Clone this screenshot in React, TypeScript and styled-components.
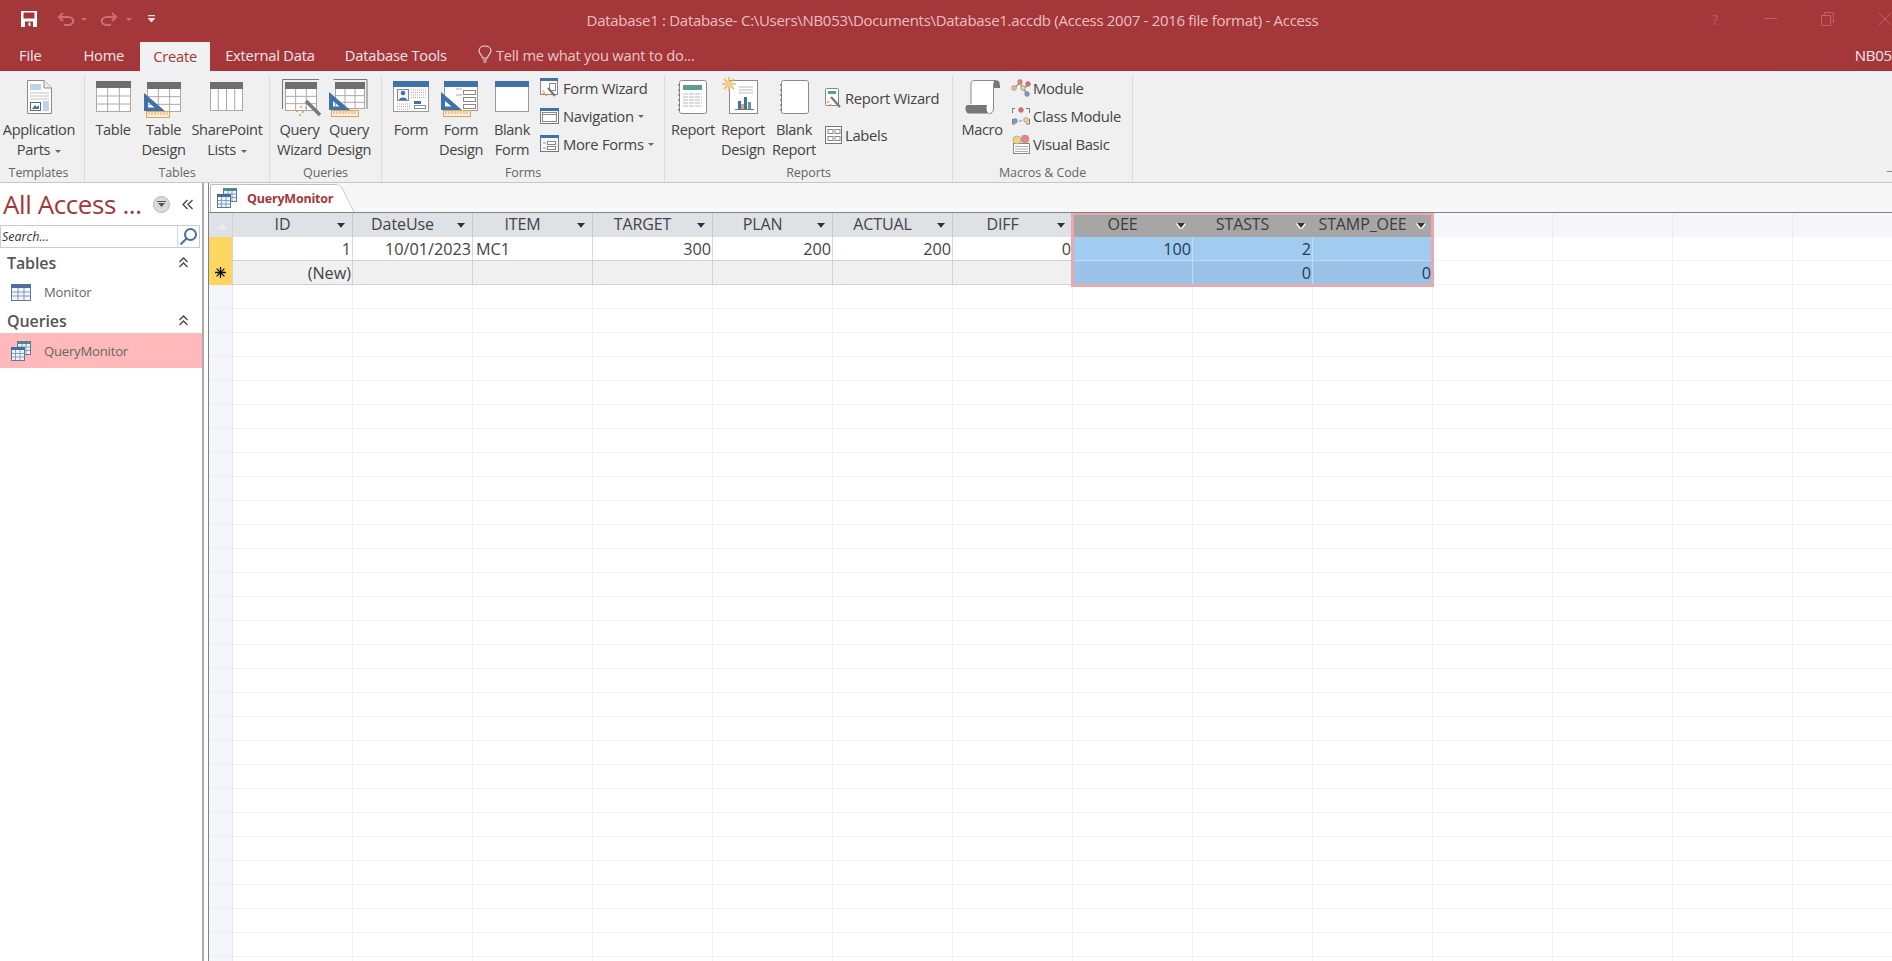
import React from "react";
import styled, { createGlobalStyle } from "styled-components";

const Global = createGlobalStyle`
  html, body { margin: 0; padding: 0; height: 100%; overflow: hidden; background: #fff; }
  #root { height: 100%; }
  * { box-sizing: border-box; }
`;

const FONT = `"Open Sans", "Noto Sans", "Liberation Sans", sans-serif`;
const RED = "#a4373a";

const Page = styled.div`
  width: 100%; height: 100vh; display: flex; flex-direction: column; overflow: hidden;
  font-family: ${FONT}; color: #444; background: #fff;
`;

/* ---------- title bar ---------- */
const TitleBar = styled.header`
  height: 41px; flex: none; background: ${RED}; display: grid;
  grid-template-columns: 1fr auto 1fr; align-items: center;
`;
const Qat = styled.div`display: flex; align-items: center; padding: 0 0 3px 20px;`;
const QatBtn = styled.span<{ $ml?: number }>`display: inline-flex; margin-left: ${(p) => p.$ml ?? 0}px;`;
const TitleText = styled.div`
  font-size: 15px; letter-spacing: -0.3px; color: #edbfc0; white-space: nowrap; padding: 0 0 0 13px; margin-top: -1px;
`;
const WinControls = styled.div`display: flex; justify-content: flex-end; align-items: center; gap: 44px; margin: -3px 0 0 0;`;
const WinHelp = styled.span`font-size: 14px; color: #bd6265; margin-right: 2px;`;

/* ---------- tabs ---------- */
const TabBar = styled.nav`
  height: 30px; flex: none; background: ${RED}; display: flex; align-items: stretch; padding-left: 4px; position: relative;
  overflow: hidden;
`;
const RibbonTab = styled.div<{ $active?: boolean; $mr?: number; $ml?: number }>`
  display: flex; align-items: center; padding: 0 ${(p) => (p.$active ? 13 : 15)}px ${(p) => (p.$active ? 2 : 3)}px;
  margin-right: ${(p) => p.$mr ?? 0}px;
  margin-left: ${(p) => p.$ml ?? 0}px;
  margin-top: ${(p) => (p.$active ? 1 : 0)}px;
  font-size: 14.7px; letter-spacing: -0.2px;
  color: ${(p) => (p.$active ? RED : "#f6e6e6")};
  background: ${(p) => (p.$active ? "#f1f1f1" : "transparent")};
`;
const TellMe = styled.div`
  display: flex; align-items: center; gap: 4px; margin-left: 16px; padding-bottom: 3px; font-size: 14.7px; letter-spacing: -0.2px; color: #eec6c7;
`;
const UserName = styled.div`
  margin-left: auto; display: flex; align-items: center; padding-bottom: 3px; font-size: 15px; color: #f8eaea; letter-spacing: -0.2px;
`;

/* ---------- ribbon ---------- */
const Ribbon = styled.section`
  height: 112px; flex: none; display: flex; padding: 4px 0 0; position: relative;
  background: linear-gradient(#eff0f4 0, #f0f0f0 10px);
  border-bottom: 1px solid #c6c6c6;
`;
const Group = styled.div<{ $w: number }>`
  width: ${(p) => p.$w}px; flex: none; display: flex; flex-direction: column; border-right: 1px solid #dcdcdc;
`;
const GroupBody = styled.div<{ $pl?: number }>`flex: 1; display: flex; padding-left: ${(p) => p.$pl ?? 0}px;`;
const GroupLabel = styled.div<{ $pr?: number }>`
  height: 18px; line-height: 18px; text-align: center; font-size: 12.5px; letter-spacing: -0.1px; color: #666;
  padding-right: ${(p) => p.$pr ?? 0}px; white-space: nowrap;
`;
const BigBtn = styled.div<{ $w: number }>`
  width: ${(p) => p.$w}px; flex: none; display: flex; flex-direction: column; align-items: center;
`;
const BigLabel = styled.div`
  width: 100%; text-align: center; font-size: 14.6px; line-height: 20px; color: #444; letter-spacing: -0.35px; white-space: nowrap;
  display: flex; flex-direction: column; align-items: center;
`;
const Caret = styled.i<{ $c?: string }>`
  display: inline-block; width: 0; height: 0; margin-left: 5px; vertical-align: 2px;
  border: 3px solid transparent; border-bottom: 0; border-top: 3.5px solid ${(p) => p.$c ?? "#666"};
`;
const SmallCol = styled.div<{ $ml?: number; $gap?: number; $pt?: number }>`
  display: flex; flex-direction: column; margin-left: ${(p) => p.$ml ?? 4}px; gap: ${(p) => p.$gap ?? 0}px;
  padding-top: ${(p) => p.$pt ?? 0}px; margin-top: -1px;
`;
const SmallBtn = styled.div<{ $gap?: number }>`
  height: 28px; display: flex; align-items: center; gap: ${(p) => p.$gap ?? 3}px; font-size: 14.8px; letter-spacing: -0.3px; color: #444; white-space: nowrap;
  & > i { margin-left: 1px; }
`;
const RibbonPin = styled.span`position: absolute; right: 0; bottom: 10px; width: 5px; height: 1px; background: #888;`;

/* ---------- body ---------- */
const Body = styled.main`flex: 1; min-height: 0; display: flex;`;
const NavPane = styled.aside`
  width: 202px; flex: none; background: #fff; display: flex; flex-direction: column;
`;
const Splitter = styled.div`
  width: 7px; flex: none; background: #fff; border-left: 2px solid #a9abb0; border-right: 1px solid #7f8188;
`;
const NavHead = styled.div`height: 42px; flex: none; display: flex; align-items: center; padding: 0 8px 0 3px; color: ${RED};`;
const NavTitle = styled.div`flex: 1; font-size: 26px; letter-spacing: -0.4px; white-space: nowrap; font-weight: 400; line-height: 1;`;
const NavRound = styled.span`
  width: 17px; height: 17px; border-radius: 50%; background: #d8dade; border: 1px solid #b5b7bb;
  display: flex; align-items: center; justify-content: center; margin-right: 12px;
`;
const SearchBox = styled.div`
  height: 23px; flex: none; width: 200px; display: flex; align-items: stretch; border: 1px solid #c8ccd2; margin-bottom: 3px;
`;
const SearchText = styled.div`flex: 1; font-size: 12.5px; font-style: italic; line-height: 21px; padding-left: 1px; color: #333;`;
const SearchIcon = styled.div`width: 22px; border-left: 1px solid #d5d8dc; display: flex; align-items: center; justify-content: center;`;
const NavSection = styled.div`
  height: 24px; flex: none; display: flex; align-items: center; justify-content: space-between; padding: 0 13px 1px 7px;
  font-size: 16px; font-weight: 600; color: #555; letter-spacing: -0.1px;
`;
const NavItem = styled.div<{ $sel?: boolean }>`
  height: ${(p) => (p.$sel ? 35 : 34)}px; flex: none; display: flex; align-items: center; gap: 13px; padding-left: 11px;
  font-size: 13.1px; color: #666; letter-spacing: -0.2px;
  background: ${(p) => (p.$sel ? "#ffb9bb" : "transparent")};
`;

const Doc = styled.section`flex: 1; min-width: 0; display: flex; flex-direction: column;`;
const DocStrip = styled.div`
  height: 29px; flex: none; background: #f7f7f7; display: flex; align-items: flex-end; padding-left: 1px;
`;
const DocTab = styled.div`
  width: 124px; height: 28px; position: relative; background: #fff; border: 1px solid #bdbdbd; border-bottom: 0; border-right: 0;
  border-radius: 3px 0 0 0; display: flex; align-items: center; gap: 10px; padding: 0 0 1px 6px;
  font-size: 12.5px; font-weight: 700; color: ${RED}; letter-spacing: -0.2px; white-space: nowrap;
  &::after {
    content: ""; position: absolute; top: -1px; right: -14px; width: 22px; height: 28px; background: #fff;
    border: 1px solid #bdbdbd; border-left: 0; border-bottom: 0; border-radius: 0 6px 0 0; transform: skewX(26deg);
    z-index: 0;
  }
  & > * { position: relative; z-index: 1; }
`;
const Sheet = styled.div`
  flex: 1; min-height: 0; position: relative; overflow: hidden; border-top: 1px solid #82828a;
`;
const HeadRow = styled.div`display: flex; height: 24px;`;
const Row = styled.div`display: flex; height: 24px;`;
const Corner = styled.div`
  width: 24px; flex: none; background: #dee1e6; border-right: 1px solid #cfd2d8; position: relative;
  &::after {
    content: ""; position: absolute; left: 7px; top: 10px; border: 6px solid transparent; border-top: 0; border-bottom: 6px solid #e9ebee;
  }
`;
const Selector = styled.div<{ $filled?: boolean }>`
  width: 24px; flex: none; display: flex; align-items: center; justify-content: center;
  background: ${(p) => (p.$filled ? "#fdd662" : "#f5f6fc")};
  border-right: 1px solid ${(p) => (p.$filled ? "#cfd2d8" : "#e6e8f0")};
  border-bottom: 1px solid ${(p) => (p.$filled ? "#fdd662" : "#eeeff4")};
`;
const HeadCell = styled.div<{ $sel?: boolean }>`
  width: 120px; flex: none; position: relative; display: flex; align-items: center; padding: 0 20px 2px 0;
  background: ${(p) => (p.$sel ? "#a6a6a6" : "#dee1e6")};
  border-right: 1px solid ${(p) => (p.$sel ? "#a6a6a6" : "#c5c9d0")};
  font-size: 16px; color: ${(p) => (p.$sel ? "#3d3d3d" : "#444")}; letter-spacing: -0.1px; line-height: 22px;
`;
const HeadLabel = styled.span`flex: 1; text-align: center; white-space: nowrap;`;
const HeadArrow = styled.span<{ $sel?: boolean }>`
  position: absolute; right: 7px; top: 10px; width: 0; height: 0;
  border: 4px solid transparent; border-bottom: 0; border-top: 5px solid #333;
  filter: ${(p) => (p.$sel ? "drop-shadow(0 1px 0 #fff) drop-shadow(1px 0 0 #fff) drop-shadow(-1px 0 0 #fff)" : "drop-shadow(0 1px 0 #fff)")};
`;
const HeadBlank = styled.div`width: 120px; flex: none; background: #f5f6fc; border-right: 1px solid #eaecf3;`;
const Cell = styled.div<{ $right?: boolean; $tone?: "new" | "empty" | "plain" | "sel" | "selNew" }>`
  width: 120px; flex: none; overflow: hidden; white-space: nowrap; font-size: 16.2px; line-height: 24px; padding: 0 1px 0 3px;
  text-align: ${(p) => (p.$right ? "right" : "left")}; color: #444;
  ${(p) => {
    switch (p.$tone) {
      case "new":
        return "background:#f0f0f0;border-right:1px solid #ced1d8;border-bottom:1px solid #ced1d8;";
      case "sel":
        return "background:#a1cbef;border-right:1px solid #c4dcf2;border-bottom:1px solid #c4dcf2;color:#1e3a5c;";
      case "selNew":
        return "background:#9ac3e7;border-right:1px solid #c4dcf2;border-bottom:1px solid #ced1d8;color:#1e3a5c;";
      case "empty":
        return "background:#fff;border-right:1px solid #f0f1f4;border-bottom:1px solid #f1f2f5;";
      default:
        return "background:#fff;border-right:1px solid #d4d7dd;border-bottom:1px solid #ced1d8;";
    }
  }}
`;
const SelectionOutline = styled.div`
  position: absolute; left: 862px; top: -1px; width: 363px; height: 75px; border: 3px solid #eaa8ad; pointer-events: none;
`;

/* ---------- icon helpers ---------- */
const Big = ({ children }: { children: React.ReactNode }) => (
  <svg width={48} height={44} viewBox="0 0 48 44" fill="none">{children}</svg>
);
const Small = ({ children }: { children: React.ReactNode }) => (
  <svg width={20} height={20} viewBox="0 0 20 20" fill="none">{children}</svg>
);

const TableG = ({ x, y, w, h, cols, rows, head = "#6e6e6e", line = "#a9a9a9", headH = 7, fill = "#fff" }: {
  x: number; y: number; w: number; h: number; cols: number; rows: number; head?: string; line?: string; headH?: number; fill?: string;
}) => {
  const v = Array.from({ length: cols - 1 }, (_, i) => x + ((i + 1) * w) / cols);
  const hr = Array.from({ length: rows - 1 }, (_, i) => y + headH + ((i + 1) * (h - headH)) / rows);
  return (
    <g>
      <rect x={x + 0.5} y={y + 0.5} width={w - 1} height={h - 1} fill={fill} stroke={line} />
      <rect x={x} y={y} width={w} height={headH} fill={head} />
      {v.map((p) => <path key={p} d={`M${p} ${y + headH}V${y + h}`} stroke={line} />)}
      {hr.map((p) => <path key={p} d={`M${x} ${p}H${x + w}`} stroke={line} />)}
    </g>
  );
};
const SetSquare = ({ x, y }: { x: number; y: number }) => (
  <path transform={`translate(${x} ${y})`} d="M0 0L21 18H0ZM4 9V14.5H10.5Z" fill="#3f72a8" fillRule="evenodd" />
);
const Ruler = ({ x, y, w }: { x: number; y: number; w: number }) => (
  <g transform={`translate(${x} ${y})`}>
    <rect x={0.5} y={0.5} width={w - 1} height={6} fill="#fbeedd" stroke="#e2a45c" />
    {Array.from({ length: Math.floor(w / 3) - 1 }, (_, i) => (
      <path key={i} d={`M${3 + i * 3} 1V4`} stroke="#e2a45c" />
    ))}
  </g>
);

const AppPartsIcon = () => (
  <Big>
    <path d="M12.5 5.5H29L36.5 13V38.5H12.5Z" fill="#fff" stroke="#8c8c8c" />
    <path d="M29 5.5V13H36.5" fill="#ececec" stroke="#8c8c8c" />
    <rect x={15} y={9} width={11} height={6} fill="#bcd3ea" />
    <path d="M15 18H34M15 21H34M15 24H34" stroke="#c4c4c4" />
    <rect x={15.5} y={27.5} width={10} height={8} fill="#fff" stroke="#666" />
    <path d="M17 34L20 30L22 32L24 30V34Z" fill="#3f72a8" />
    <rect x={28} y={26} width={6} height={10} fill="#bcd3ea" />
  </Big>
);
const TableIcon = () => <Big><TableG x={7} y={6} w={35} h={31} cols={3} rows={3} /></Big>;
const TableDesignIcon = () => (
  <Big><TableG x={7} y={7} w={34} h={30} cols={3} rows={3} /><SetSquare x={4} y={18} /><Ruler x={6} y={36} w={24} /></Big>
);
const SharePointIcon = () => <Big><TableG x={7} y={7} w={33} h={29} cols={4} rows={1} /></Big>;
const QueryWizardIcon = () => (
  <Big>
    <path d="M6.5 34V4.5H43" stroke="#777" />
    <TableG x={9} y={7} w={32} h={29} cols={3} rows={3} />
    <path d="M30 26L44 40" stroke="#7a7a7a" strokeWidth={3.5} />
    <path d="M24 32h2M20 36h2M26 37h2M23 40h2M29 33h1" stroke="#e39a4a" strokeWidth={1.5} />
  </Big>
);
const QueryDesignIcon = () => (
  <Big>
    <path d="M8.5 4.5H42V34" stroke="#777" />
    <TableG x={10} y={7} w={30} h={27} cols={3} rows={3} />
    <SetSquare x={4} y={17} /><Ruler x={6} y={35} w={28} />
  </Big>
);
const FormHead = ({ x, y, w, h }: { x: number; y: number; w: number; h: number }) => (
  <g>
    <rect x={x + 0.5} y={y + 0.5} width={w - 1} height={h - 1} fill="#fff" stroke="#9a9a9a" />
    <rect x={x} y={y} width={w} height={6} fill="#3f72a8" />
  </g>
);
const FormIcon = () => (
  <Big>
    <FormHead x={6} y={6} w={36} h={31} />
    <rect x={10.5} y={14.5} width={11} height={11} fill="#f4f4f4" stroke="#888" />
    <circle cx={16} cy={18} r={2.3} fill="#3f72a8" />
    <path d="M12 25C12 21.5 20 21.5 20 25Z" fill="#3f72a8" />
    <path d="M24 15h15M24 17.5h15M24 20h15M24 22.5h15" stroke="#b0b0b0" strokeDasharray="1 1" />
    <path d="M10 29h14M10 31.5h14M10 34h14" stroke="#b0b0b0" strokeDasharray="1 1" />
    <rect x={27} y={26} width={7} height={3} fill="#3f72a8" />
    <rect x={27.5} y={30.5} width={11} height={3} fill="#fff" stroke="#888" />
  </Big>
);
const FormDesignIcon = () => (
  <Big>
    <FormHead x={7} y={6} w={34} h={30} />
    <path d="M19 14h6M19 20h6" stroke="#aaa" />
    <rect x={26.5} y={15.5} width={12} height={4} fill="#fff" stroke="#888" />
    <rect x={26.5} y={22.5} width={12} height={4} fill="#fff" stroke="#888" />
    <rect x={26.5} y={29.5} width={12} height={4} fill="#fff" stroke="#888" />
    <SetSquare x={4} y={17} /><Ruler x={6} y={35} w={28} />
  </Big>
);
const BlankFormIcon = () => <Big><FormHead x={7} y={6} w={34} h={31} /></Big>;
const Spiral = ({ x }: { x: number }) => (
  <path d={`M${x} 9v2M${x} 14v2M${x} 19v2M${x} 24v2M${x} 29v2M${x} 34v2`} stroke="#777" strokeWidth={1.4} />
);
const ReportIcon = () => (
  <Big>
    <rect x={10.5} y={5.5} width={27} height={33} rx={2} fill="#fff" stroke="#8a8a8a" />
    <Spiral x={10} />
    <rect x={14} y={10} width={19} height={5} fill="#5f9d8d" />
    <path d="M14 19h19M14 22h19M14 25h19M14 28h19M14 31h19" stroke="#b8b8b8" strokeDasharray="5 1" />
  </Big>
);
const ReportDesignIcon = () => (
  <Big>
    <rect x={10.5} y={5.5} width={28} height={33} fill="#fff" stroke="#8a8a8a" />
    <path d="M20 12h14M20 15h14M20 18h14" stroke="#bbb" />
    <g transform="translate(10 9)" stroke="#f0b45a" strokeWidth={1.6}>
      <path d="M-7 0H7M0 -7V7M-5 -5L5 5M-5 5L5 -5" />
      <circle r={3} fill="#f7cf84" stroke="none" />
    </g>
    <path d="M19 34V26h3v8ZM25 34V22h3v12Z" fill="#3f72a8" />
    <path d="M22 34V29h3v5Z" fill="#e2a45c" />
    <path d="M29 34V27h3v7Z" fill="#5f9d8d" />
    <path d="M16 34.5H35" stroke="#777" />
  </Big>
);
const BlankReportIcon = () => (
  <Big><rect x={11.5} y={5.5} width={27} height={33} rx={2} fill="#fff" stroke="#8a8a8a" /><Spiral x={11} /></Big>
);
const MacroIcon = () => (
  <Big>
    <path d="M13 29V9C13 6.5 14.5 5.5 17 5.5H38C36 6 35.5 8 35.5 10V34C35.5 37 33.5 38.5 31 38.5" fill="#fff" stroke="#8a8a8a" />
    <path d="M36 5.5H39C41 5.5 42 7 42 13H36Z" fill="#777" />
    <path d="M10 30H29C28 33 28.5 37 31 38.5H11C7 38.5 6 30 10 30Z" fill="#777" />
  </Big>
);

const FormWizardIcon = () => (
  <Small>
    <rect x={0.5} y={0.5} width={17} height={16} fill="#fff" stroke="#888" />
    <rect x={0} y={0} width={18} height={3} fill="#3f72a8" />
    <rect x={9.5} y={5.5} width={6} height={7} fill="#fff" stroke="#888" />
    <path d="M8 10L15 18" stroke="#777" strokeWidth={2.2} />
    <path d="M3 16l2-2M6 18l2-2M2 13h2" stroke="#e39a4a" strokeWidth={1.2} />
  </Small>
);
const NavigationIcon = () => (
  <Small>
    <rect x={0.5} y={2.5} width={18} height={15} fill="#fff" stroke="#777" />
    <rect x={0} y={2} width={19} height={3} fill="#3f72a8" />
    <rect x={2.5} y={6.5} width={14} height={9} fill="#fff" stroke="#888" />
    <path d="M3 8.5h13" stroke="#888" />
  </Small>
);
const MoreFormsIcon = () => (
  <Small>
    <rect x={0.5} y={1.5} width={18} height={16} fill="#f4f7fb" stroke="#777" />
    <rect x={0} y={1} width={19} height={3} fill="#3f72a8" />
    <rect x={7.5} y={7.5} width={8} height={3} fill="#fff" stroke="#888" />
    <rect x={7.5} y={12.5} width={8} height={3} fill="#fff" stroke="#888" />
    <path d="M3 9h3M3 14h3" stroke="#999" />
  </Small>
);
const ReportWizardIcon = () => (
  <Small>
    <rect x={1.5} y={0.5} width={13} height={17} rx={1} fill="#fff" stroke="#888" />
    <rect x={4} y={3} width={8} height={3} fill="#5f9d8d" />
    <path d="M7 9L16 19" stroke="#777" strokeWidth={2.2} />
    <path d="M3 15l2-2M5 18l2-2" stroke="#e39a4a" strokeWidth={1.2} />
  </Small>
);
const LabelsIcon = () => (
  <Small>
    <rect x={1.5} y={1.5} width={16} height={17} fill="#fff" stroke="#777" />
    <rect x={4} y={4.5} width={5} height={4} stroke="#888" />
    <rect x={11} y={4.5} width={5} height={4} stroke="#888" />
    <rect x={4} y={11.5} width={5} height={4} stroke="#888" />
    <rect x={11} y={11.5} width={5} height={4} stroke="#888" />
  </Small>
);
const Bead = ({ x, y, c }: { x: number; y: number; c: string }) => (
  <circle cx={x} cy={y} r={2.4} fill={c} stroke="#777" strokeWidth={0.5} />
);
const ModuleIcon = () => (
  <Small>
    <path d="M3 10L9 5L12 11L17 7M12 11L16 15" stroke="#888" strokeWidth={1.2} />
    <Bead x={3} y={10} c="#f2b6a6" /><Bead x={9} y={4} c="#e8807c" /><Bead x={12} y={10} c="#f2d27c" />
    <Bead x={17} y={6} c="#e06a6a" /><Bead x={16} y={16} c="#6f9fcf" />
  </Small>
);
const ClassIcon = () => (
  <Small>
    <path d="M4 2.5H1.5V7M15 2.5H18.5V7M1.5 13V18H4M18.5 13V18H15" stroke="#777" />
    <Bead x={10} y={4} c="#e06a6a" /><Bead x={4} y={15} c="#6f9fcf" /><Bead x={15} y={14} c="#f2d27c" />
    <path d="M8 15h3" stroke="#888" />
  </Small>
);
const VbIcon = () => (
  <Small>
    <rect x={2.5} y={9.5} width={16} height={10} fill="#fff" stroke="#888" />
    <path d="M4 12.5h13M4 15h13M4 17.5h13" stroke="#aaa" />
    <circle cx={6} cy={6} r={4} fill="#f2d27c" stroke="#999" strokeWidth={0.6} />
    <circle cx={14} cy={5} r={4} fill="#e9848a" stroke="#999" strokeWidth={0.6} />
  </Small>
);
const NavTableIcon = () => (
  <svg width={20} height={17} viewBox="0 0 20 17" fill="none">
    <rect x={0.5} y={0.5} width={19} height={16} fill="#f3f6fb" stroke="#61799c" />
    <rect x={0} y={0} width={20} height={4} fill="#4d6e9e" />
    <path d="M7 4V16M13 4V16M1 8h18M1 12h18" stroke="#7e97ba" />
  </svg>
);
const QueryIcon = () => (
  <svg width={20} height={20} viewBox="0 0 20 20" fill="none">
    <rect x={6.5} y={0.5} width={13} height={13} fill="#eef3f8" stroke="#5c7a93" />
    <rect x={6} y={0} width={14} height={3} fill="#4f8a8c" />
    <path d="M11 3V13M15 3V13M7 6h12M7 9.5h12" stroke="#86a0b5" />
    <rect x={0.5} y={6.5} width={13} height={13} fill="#eef3f8" stroke="#5c7a93" />
    <rect x={0} y={6} width={14} height={3} fill="#3f6f9e" />
    <path d="M4.5 9V19M9 9V19M1 12.5h12M1 16h12" stroke="#86a0b5" />
  </svg>
);
const ChevUp = () => (
  <svg width={11} height={11} viewBox="0 0 11 11" fill="none" stroke="#444" strokeWidth={1.3}>
    <path d="M1.5 5L5.5 1L9.5 5M1.5 10L5.5 6L9.5 10" />
  </svg>
);
const Star = () => (
  <svg width={13} height={13} viewBox="0 0 13 13" stroke="#111" strokeWidth={1.3}>
    <path d="M6.5 1V12M1 6.5H12M2.6 2.6L10.4 10.4M2.6 10.4L10.4 2.6" />
  </svg>
);

/* ---------- data ---------- */
type Col = { name: string; right?: boolean };
const COLUMNS: Col[] = [
  { name: "ID", right: true }, { name: "DateUse", right: true }, { name: "ITEM" },
  { name: "TARGET", right: true }, { name: "PLAN", right: true }, { name: "ACTUAL", right: true },
  { name: "DIFF", right: true }, { name: "OEE", right: true }, { name: "STASTS", right: true }, { name: "STAMP_OEE", right: true },
];
const ROW1 = ["1", "10/01/2023", "MC1", "300", "200", "200", "0", "100", "2", ""];
const ROW2 = ["(New)", "", "", "", "", "", "", "", "0", "0"];
const BLANK_COLS = 4;
const EMPTY_ROWS = 29;
const isSel = (i: number) => i >= 7;

export default function App() {
  return (
    <Page>
      <Global />
      <TitleBar>
        <Qat>
          <QatBtn>
            <svg width={18} height={18} viewBox="0 0 18 18" fill="none">
              <path d="M1 1H17V17H1Z" fill="#fff" />
              <rect x={3.5} y={2.5} width={11} height={6} fill={RED} />
              <rect x={5} y={11.5} width={8} height={5.5} fill={RED} />
              <rect x={8.5} y={12.5} width={2} height={3.5} fill="#fff" />
            </svg>
          </QatBtn>
          <QatBtn $ml={19}>
            <svg width={18} height={15} viewBox="0 0 18 15" fill="none" stroke="#c96f71" strokeWidth={2.2}>
              <path d="M6 1L2 5L6 9M2 5H11C18 5 18 13 11 13H7" />
            </svg>
          </QatBtn>
          <QatBtn $ml={1}><Caret $c="#c96f71" /></QatBtn>
          <QatBtn $ml={13}>
            <svg width={18} height={15} viewBox="0 0 18 15" fill="none" stroke="#c96f71" strokeWidth={2.2}>
              <path d="M12 1L16 5L12 9M16 5H7C0 5 0 13 7 13H11" />
            </svg>
          </QatBtn>
          <QatBtn $ml={3}><Caret $c="#c96f71" /></QatBtn>
          <QatBtn $ml={15}>
            <svg width={9} height={8} viewBox="0 0 9 8"><path d="M1 0H8V1.3H1ZM0.5 3H8.5L4.5 7.5Z" fill="#f3e3e3" /></svg>
          </QatBtn>
        </Qat>
        <TitleText>Database1 : Database- C:\Users\NB053\Documents\Database1.accdb (Access 2007 - 2016 file format) - Access</TitleText>
        <WinControls>
          <WinHelp>?</WinHelp>
          <svg width={13} height={2} viewBox="0 0 13 2"><rect width={13} height={1} fill="#bd6265" /></svg>
          <svg width={13} height={14} viewBox="0 0 13 14" fill="none" stroke="#bd6265"><path d="M3.5 3V.5H12.5V10H10M.5 3.5H9.5V13.5H.5Z" /></svg>
          <svg width={14} height={14} viewBox="0 0 14 14" fill="none" stroke="#bd6265"><path d="M1 1L13 13M13 1L1 13" /></svg>
        </WinControls>
      </TitleBar>

      <TabBar>
        <RibbonTab $mr={12}>File</RibbonTab>
        <RibbonTab>Home</RibbonTab>
        <RibbonTab $active $ml={1}>Create</RibbonTab>
        <RibbonTab>External Data</RibbonTab>
        <RibbonTab>Database Tools</RibbonTab>
        <TellMe>
          <svg width={14} height={19} viewBox="0 0 14 19" fill="none" stroke="#f4dcdc" strokeWidth={1.1}>
            <path d="M4.5 13C4.5 10 1 9 1 5.7C1 3 3.5 1 7 1S13 3 13 5.7C13 9 9.5 10 9.5 13ZM5 15H9M5.5 17H8.5" />
          </svg>
          Tell me what you want to do...
        </TellMe>
        <UserName>NB05</UserName>
      </TabBar>

      <Ribbon>
        <Group $w={85}>
          <GroupBody>
            <BigBtn $w={78}><AppPartsIcon /><BigLabel><span>Application</span><span>Parts<Caret /></span></BigLabel></BigBtn>
          </GroupBody>
          <GroupLabel $pr={7}>Templates</GroupLabel>
        </Group>
        <Group $w={185}>
          <GroupBody $pl={6}>
            <BigBtn $w={44}><TableIcon /><BigLabel><span>Table</span></BigLabel></BigBtn>
            <BigBtn $w={57}><TableDesignIcon /><BigLabel><span>Table</span><span>Design</span></BigLabel></BigBtn>
            <BigBtn $w={70}><SharePointIcon /><BigLabel><span>SharePoint</span><span>Lists<Caret /></span></BigLabel></BigBtn>
          </GroupBody>
          <GroupLabel>Tables</GroupLabel>
        </Group>
        <Group $w={112}>
          <GroupBody $pl={6}>
            <BigBtn $w={47}><QueryWizardIcon /><BigLabel><span>Query</span><span>Wizard</span></BigLabel></BigBtn>
            <BigBtn $w={52}><QueryDesignIcon /><BigLabel><span>Query</span><span>Design</span></BigLabel></BigBtn>
          </GroupBody>
          <GroupLabel>Queries</GroupLabel>
        </Group>
        <Group $w={283}>
          <GroupBody $pl={6}>
            <BigBtn $w={46}><FormIcon /><BigLabel><span>Form</span></BigLabel></BigBtn>
            <BigBtn $w={54}><FormDesignIcon /><BigLabel><span>Form</span><span>Design</span></BigLabel></BigBtn>
            <BigBtn $w={48}><BlankFormIcon /><BigLabel><span>Blank</span><span>Form</span></BigLabel></BigBtn>
            <SmallCol $pt={0}>
              <SmallBtn><FormWizardIcon />Form Wizard</SmallBtn>
              <SmallBtn><NavigationIcon />Navigation<Caret /></SmallBtn>
              <SmallBtn><MoreFormsIcon />More Forms<Caret /></SmallBtn>
            </SmallCol>
          </GroupBody>
          <GroupLabel>Forms</GroupLabel>
        </Group>
        <Group $w={288}>
          <GroupBody $pl={3}>
            <BigBtn $w={50}><ReportIcon /><BigLabel><span>Report</span></BigLabel></BigBtn>
            <BigBtn $w={50}><ReportDesignIcon /><BigLabel><span>Report</span><span>Design</span></BigLabel></BigBtn>
            <BigBtn $w={52}><BlankReportIcon /><BigLabel><span>Blank</span><span>Report</span></BigLabel></BigBtn>
            <SmallCol $ml={4} $gap={9} $pt={10}>
              <SmallBtn $gap={1}><ReportWizardIcon />Report Wizard</SmallBtn>
              <SmallBtn $gap={1}><LabelsIcon />Labels</SmallBtn>
            </SmallCol>
          </GroupBody>
          <GroupLabel>Reports</GroupLabel>
        </Group>
        <Group $w={180}>
          <GroupBody $pl={4}>
            <BigBtn $w={50}><MacroIcon /><BigLabel><span>Macro</span></BigLabel></BigBtn>
            <SmallCol>
              <SmallBtn $gap={2}><ModuleIcon />Module</SmallBtn>
              <SmallBtn $gap={2}><ClassIcon />Class Module</SmallBtn>
              <SmallBtn $gap={2}><VbIcon />Visual Basic</SmallBtn>
            </SmallCol>
          </GroupBody>
          <GroupLabel>Macros &amp; Code</GroupLabel>
        </Group>
        <RibbonPin />
      </Ribbon>

      <Body>
        <NavPane>
          <NavHead>
            <NavTitle>All Access ...</NavTitle>
            <NavRound>
              <svg width={9} height={6} viewBox="0 0 9 6"><path d="M0 0H9V1H0ZM1 2H8L4.5 6Z" fill="#555" /></svg>
            </NavRound>
            <svg width={12} height={11} viewBox="0 0 12 11" fill="none" stroke="#444" strokeWidth={1.3}>
              <path d="M5.5 1L1 5.5L5.5 10M10.5 1L6 5.5L10.5 10" />
            </svg>
          </NavHead>
          <SearchBox>
            <SearchText>Search...</SearchText>
            <SearchIcon>
              <svg width={19} height={19} viewBox="0 0 19 19" fill="none" stroke="#3f72a8" strokeWidth={2}>
                <circle cx={11.5} cy={7.5} r={5.5} /><path d="M7.5 11.5L1.5 17.5" />
              </svg>
            </SearchIcon>
          </SearchBox>
          <NavSection>Tables<ChevUp /></NavSection>
          <NavItem><NavTableIcon />Monitor</NavItem>
          <NavSection>Queries<ChevUp /></NavSection>
          <NavItem $sel><QueryIcon />QueryMonitor</NavItem>
        </NavPane>
        <Splitter />
        <Doc>
          <DocStrip>
            <DocTab><QueryIcon /><span>QueryMonitor</span></DocTab>
          </DocStrip>
          <Sheet>
            <HeadRow>
              <Corner />
              {COLUMNS.map((c, i) => (
                <HeadCell key={c.name} $sel={isSel(i)}>
                  <HeadLabel>{c.name}</HeadLabel>
                  <HeadArrow $sel={isSel(i)} />
                </HeadCell>
              ))}
              {Array.from({ length: BLANK_COLS }, (_, i) => <HeadBlank key={i} />)}
            </HeadRow>
            <Row>
              <Selector $filled />
              {ROW1.map((v, i) => (
                <Cell key={i} $right={COLUMNS[i].right} $tone={isSel(i) ? "sel" : "plain"}>{v}</Cell>
              ))}
              {Array.from({ length: BLANK_COLS }, (_, i) => <Cell key={i} $tone="empty" />)}
            </Row>
            <Row>
              <Selector $filled><Star /></Selector>
              {ROW2.map((v, i) => (
                <Cell key={i} $right={COLUMNS[i].right} $tone={isSel(i) ? "selNew" : "new"}>{v}</Cell>
              ))}
              {Array.from({ length: BLANK_COLS }, (_, i) => <Cell key={i} $tone="empty" />)}
            </Row>
            {Array.from({ length: EMPTY_ROWS }, (_, r) => (
              <Row key={r}>
                <Selector />
                {Array.from({ length: COLUMNS.length + BLANK_COLS }, (_, i) => <Cell key={i} $tone="empty" />)}
              </Row>
            ))}
            <SelectionOutline />
          </Sheet>
        </Doc>
      </Body>
    </Page>
  );
}
